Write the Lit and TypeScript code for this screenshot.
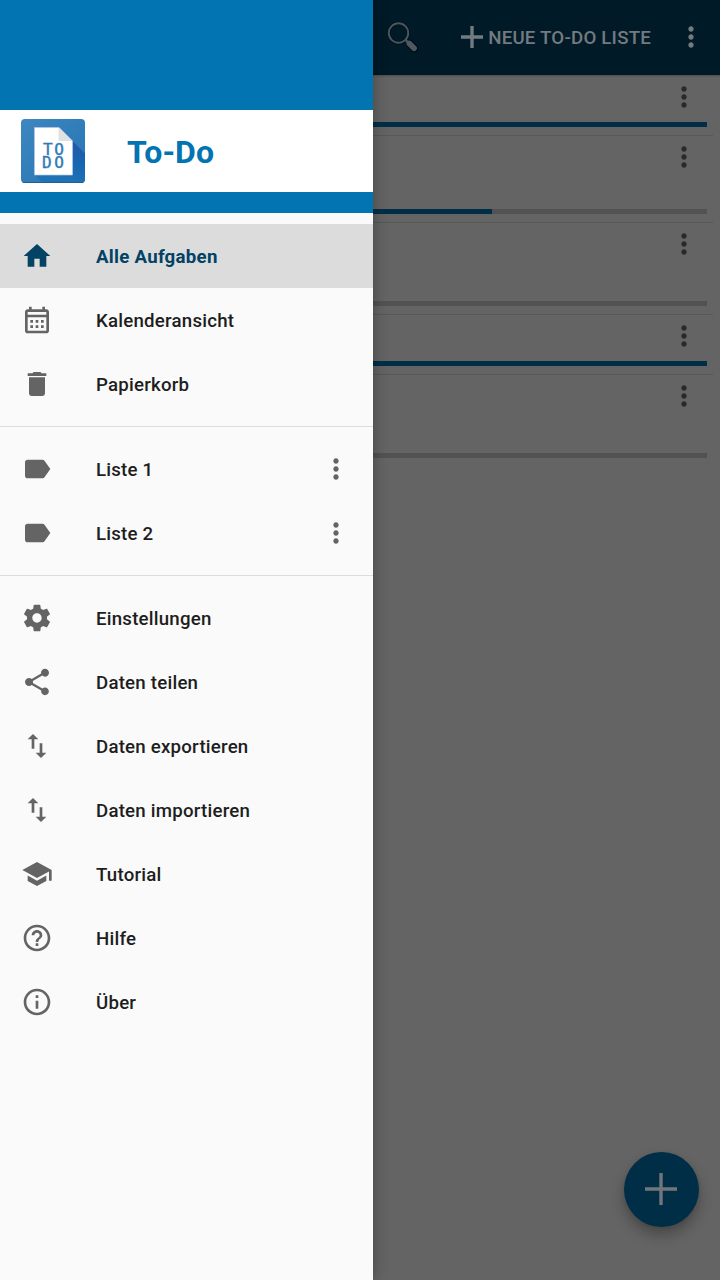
import { LitElement, html, css } from "lit";
import { customElement, property } from "lit/decorators.js";

const ICONS: Record<string, string> = {
  home: "M10 20v-6h4v6h5v-8h3L12 3 2 12h3v8z",
  trash: "M6 19c0 1.1.9 2 2 2h8c1.1 0 2-.9 2-2V7H6v12zM19 4h-3.5l-1-1h-5l-1 1H5v2h14V4z",
  label: "M17.63 5.84C17.27 5.33 16.67 5 16 5L5 5.01C3.9 5.01 3 5.9 3 7v10c0 1.1.9 1.99 2 1.99L16 19c.67 0 1.27-.33 1.63-.84L22 12l-4.37-6.16z",
  settings: "M19.43 12.98c.04-.32.07-.64.07-.98s-.03-.66-.07-.98l2.11-1.65c.19-.15.24-.42.12-.64l-2-3.46c-.12-.22-.39-.3-.61-.22l-2.49 1c-.52-.4-1.08-.73-1.69-.98l-.38-2.65C14.46 2.18 14.25 2 14 2h-4c-.25 0-.46.18-.49.42l-.38 2.65c-.61.25-1.17.59-1.69.98l-2.49-1c-.23-.09-.49 0-.61.22l-2 3.46c-.13.22-.07.49.12.64l2.11 1.65c-.04.32-.07.65-.07.98s.03.66.07.98l-2.11 1.65c-.19.15-.24.42-.12.64l2 3.46c.12.22.39.3.61.22l2.49-1c.52.4 1.08.73 1.69.98l.38 2.65c.03.24.24.42.49.42h4c.25 0 .46-.18.49-.42l.38-2.65c.61-.25 1.17-.59 1.69-.98l2.49 1c.23.09.49 0 .61-.22l2-3.46c.12-.22.07-.49-.12-.64l-2.11-1.65zM12 15.5c-1.93 0-3.5-1.57-3.5-3.5s1.57-3.5 3.5-3.5 3.5 1.57 3.5 3.5-1.57 3.5-3.5 3.5z",
  share: "M18 16.08c-.76 0-1.44.3-1.96.77L8.91 12.7c.05-.23.09-.46.09-.7s-.04-.47-.09-.7l7.05-4.11c.54.5 1.25.81 2.04.81 1.66 0 3-1.34 3-3s-1.34-3-3-3-3 1.34-3 3c0 .24.04.47.09.7L8.04 9.81C7.5 9.31 6.79 9 6 9c-1.66 0-3 1.34-3 3s1.34 3 3 3c.79 0 1.5-.31 2.04-.81l7.12 4.16c-.05.21-.08.43-.08.65 0 1.61 1.31 2.92 2.92 2.92 1.61 0 2.92-1.31 2.92-2.92s-1.31-2.92-2.92-2.92z",
  swap: "M16 17.01V10h-2v7.01h-3L15 21l4-3.99h-3zM9 3L5 6.99h3V14h2V6.99h3L9 3z",
  school: "M5 13.18v4L12 21l7-3.82v-4L12 17l-7-3.82zM12 3L1 9l11 6 9-4.91V17h2V9L12 3z",
  help: "M11 18h2v-2h-2v2zm1-16C6.48 2 2 6.48 2 12s4.48 10 10 10 10-4.48 10-10S17.52 2 12 2zm0 18c-4.41 0-8-3.59-8-8s3.59-8 8-8 8 3.59 8 8-3.59 8-8 8zm0-14c-2.21 0-4 1.79-4 4h2c0-1.1.9-2 2-2s2 .9 2 2c0 2-3 1.75-3 5h2c0-2.25 3-2.5 3-5 0-2.21-1.79-4-4-4z",
  info: "M11 17h2v-6h-2v6zm1-15C6.48 2 2 6.48 2 12s4.48 10 10 10 10-4.48 10-10S17.52 2 12 2zm0 18c-4.41 0-8-3.59-8-8s3.59-8 8-8 8 3.59 8 8-3.59 8-8 8zM11 9h2V7h-2v2z",
  more: "M12 8c1.1 0 2-.9 2-2s-.9-2-2-2-2 .9-2 2 .9 2 2 2zm0 2c-1.1 0-2 .9-2 2s.9 2 2 2 2-.9 2-2-.9-2-2-2zm0 6c-1.1 0-2 .9-2 2s.9 2 2 2 2-.9 2-2-.9-2-2-2z",
  calendar: "M19 4h-1V2h-2v2H8V2H6v2H5c-1.1 0-2 .9-2 2v14c0 1.1.9 2 2 2h14c1.1 0 2-.9 2-2V6c0-1.1-.9-2-2-2zm0 16H5V10h14v10zm0-12H5V6h14v2zM7 12h2v2H7zm4 0h2v2h-2zm4 0h2v2h-2zM7 16h2v2H7zm4 0h2v2h-2zm4 0h2v2h-2z",
};

@customElement("md-icon")
class MdIcon extends LitElement {
  @property() name = "";
  static styles = css`
    :host { display: block; width: 32px; height: 32px; flex: none; }
    svg { display: block; width: 100%; height: 100%; fill: currentColor; }
  `;
  render() {
    return html`<svg viewBox="0 0 24 24"><path d=${ICONS[this.name]}></path></svg>`;
  }
}

@customElement("app-logo")
class AppLogo extends LitElement {
  static styles = css`
    :host { display: block; width: 64px; height: 64px; flex: none; }
    svg { display: block; }
    text { font: 400 16px "DejaVu Sans Mono", monospace; fill: #3079b8; stroke: #3079b8; stroke-width: 0.4px; }
  `;
  render() {
    return html`<svg width="64" height="64" viewBox="0 0 64 64">
      <defs>
        <linearGradient id="bg" x1="0" y1="0" x2="1" y2="1">
          <stop offset="0" stop-color="#3f87c0"></stop>
          <stop offset="1" stop-color="#2474b2"></stop>
        </linearGradient>
        <linearGradient id="sh" gradientUnits="userSpaceOnUse" x1="54" y1="26" x2="44" y2="62">
          <stop offset="0" stop-color="#2459aa"></stop>
          <stop offset="0.45" stop-color="#1766b0"></stop>
          <stop offset="1" stop-color="#1f73b5"></stop>
        </linearGradient>
        <clipPath id="clip"><rect width="64" height="64" rx="4"></rect></clipPath>
      </defs>
      <g clip-path="url(#clip)">
        <rect width="64" height="64" fill="url(#bg)"></rect>
        <path d="M51 21.5L64 34.5V64H22L13.5 55.5z" fill="url(#sh)"></path>
        <rect y="63" width="64" height="1" fill="#245f94"></rect>
      </g>
      <path d="M13.5 8.5H38L51.5 22V56H13.5z" fill="#fff" stroke="#b5c6ea" stroke-width="0.7"></path>
      <path d="M37.5 8.5L51.5 22H37.5z" fill="#e1e1e1"></path>
      <text><tspan x="22 33.2" y="35.6">TO</tspan><tspan x="20.9 33.2" y="48.8">DO</tspan></text>
    </svg>`;
  }
}

@customElement("nav-item")
class NavItem extends LitElement {
  @property() icon = "";
  @property() label = "";
  @property({ type: Boolean, reflect: true }) active = false;
  @property({ type: Boolean }) menu = false;
  static styles = css`
    :host {
      display: flex; align-items: center; height: 64px; box-sizing: border-box;
      padding: 0 21px; color: #646464;
    }
    :host([active]) { background: #dcdcdc; color: #024265; }
    .label {
      flex: 1; margin-left: 43px; padding-top: 2px; color: #1e1e1e;
      font-weight: 500; letter-spacing: 0.22px; white-space: nowrap;
    }
    :host([active]) .label { color: #024265; font-weight: 700; letter-spacing: 0.27px; }
  `;
  render() {
    return html`<md-icon name=${this.icon}></md-icon>
      <span class="label">${this.label}</span>
      ${this.menu ? html`<md-icon name="more"></md-icon>` : ""}`;
  }
}

interface Task { height: number; progress: number; }
const TASKS: Task[] = [
  { height: 60, progress: 100 },
  { height: 87, progress: 69.3 },
  { height: 92, progress: 0 },
  { height: 60, progress: 100 },
  { height: 92, progress: 0 },
];

@customElement("app-root")
class AppRoot extends LitElement {
  static styles = css`
    :host {
      display: block; position: relative; height: 1280px; overflow: hidden;
      background: #646464; font: 500 18.67px/24px Roboto, sans-serif;
    }
    .toolbar {
      display: flex; align-items: center; justify-content: flex-end; height: 75px;
      box-sizing: border-box; padding: 0 13px 1px 0; background: #011a28; color: #737b80;
      box-shadow: 0 1px 2px rgba(0, 0, 0, 0.25);
    }
    .search { display: block; margin-right: 42px; }
    .new { display: flex; align-items: center; gap: 5px; margin-right: 24px; white-space: nowrap; }
    .new svg { display: block; }
    .new span { padding-top: 2px; letter-spacing: 0.22px; }
    .tasks { padding: 1px 7px 0 0; }
    .task {
      display: flex; flex-direction: column; justify-content: space-between;
      align-items: flex-end; box-sizing: border-box; padding: 5px 6px 8px 0;
      border-bottom: 1px solid #585858; color: #2a2a2a;
    }
    .task:last-child { border-color: transparent; }
    .task md-icon { margin-right: 7px; }
    .track { width: 700px; height: 5px; background: #525252; }
    .fill { height: 5px; background: #012e47; }
    .fab {
      position: absolute; right: 21px; bottom: 53px; width: 75px; height: 75px;
      display: flex; align-items: flex-start; box-sizing: border-box; padding: 21px;
      border-radius: 50%; background: #012e47;
      box-shadow: 0 8px 14px rgba(0, 0, 0, 0.28), 0 1px 4px rgba(0, 0, 0, 0.08);
    }
    .fab svg { display: block; flex: none; }
    .drawer {
      position: absolute; left: 0; top: 0; bottom: 0; width: 373px; background: #fafafa;
      box-shadow: 0 0 14px rgba(0, 0, 0, 0.32);
    }
    .header { background: #0274b2; padding: 110px 0 21px; }
    .brand {
      display: flex; align-items: center; height: 82px; padding-left: 21px; background: #fff;
    }
    h1 {
      margin: 0 0 0 42px; padding-top: 2px; font-size: 32px; line-height: 40px;
      font-weight: 700; letter-spacing: 0.1px; color: #0274b2;
    }
    nav { padding-top: 11px; }
    .group + .group { margin-top: 10px; border-top: 1px solid #dcdcdc; padding-top: 10px; }
  `;
  render() {
    return html`
      <header class="toolbar">
        <svg class="search" width="32" height="32" viewBox="0 0 32 32">
          <path d="M22.5 22.5l5 5" stroke="#000c14" stroke-width="7.5" stroke-linecap="round"></path>
          <circle cx="11.5" cy="12" r="9.7" fill="none" stroke="#000f19" stroke-width="3.4"></circle>
          <circle cx="11.5" cy="12" r="9.7" fill="none" stroke="#4a565d" stroke-width="2"></circle>
          <path d="M18.3 18.7l4 4" stroke="#4a565d" stroke-width="2.4"></path>
          <path d="M22.3 22.5l4.8 4.8" stroke="#4f5a60" stroke-width="5.6" stroke-linecap="round"></path>
        </svg>
        <div class="new">
          <svg width="22" height="22" viewBox="0 0 22 22"><path d="M11 0v22M0 11h22" stroke="#737b80" stroke-width="3.4"></path></svg>
          <span>NEUE TO-DO LISTE</span>
        </div>
        <md-icon name="more"></md-icon>
      </header>
      <main class="tasks">
        ${TASKS.map((t) => html`
          <section class="task" style="height:${t.height}px">
            <md-icon name="more"></md-icon>
            <div class="track"><div class="fill" style="width:${t.progress}%"></div></div>
          </section>`)}
      </main>
      <div class="fab">
        <svg width="32" height="32" viewBox="0 0 32 32"><path d="M16 0v32M0 16h32" stroke="#6f777b" stroke-width="3.4"></path></svg>
      </div>
      <aside class="drawer">
        <div class="header">
          <div class="brand"><app-logo></app-logo><h1>To-Do</h1></div>
        </div>
        <nav>
          <div class="group">
            <nav-item active icon="home" label="Alle Aufgaben"></nav-item>
            <nav-item icon="calendar" label="Kalenderansicht"></nav-item>
            <nav-item icon="trash" label="Papierkorb"></nav-item>
          </div>
          <div class="group">
            <nav-item menu icon="label" label="Liste 1"></nav-item>
            <nav-item menu icon="label" label="Liste 2"></nav-item>
          </div>
          <div class="group">
            <nav-item icon="settings" label="Einstellungen"></nav-item>
            <nav-item icon="share" label="Daten teilen"></nav-item>
            <nav-item icon="swap" label="Daten exportieren"></nav-item>
            <nav-item icon="swap" label="Daten importieren"></nav-item>
            <nav-item icon="school" label="Tutorial"></nav-item>
            <nav-item icon="help" label="Hilfe"></nav-item>
            <nav-item icon="info" label="Über"></nav-item>
          </div>
        </nav>
      </aside>`;
  }
}
